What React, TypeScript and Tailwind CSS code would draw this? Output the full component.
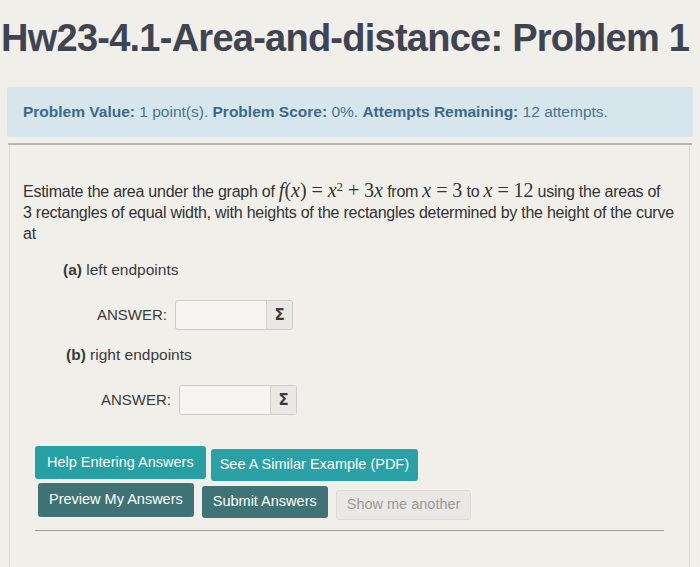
import React from 'react';

const AnswerBox = () => (
  <div className="flex h-[30px] w-[118px] rounded-[3px] border border-[#cfcdc8] bg-[#f6f5f1] overflow-hidden">
    <div className="flex-1" />
    <div className="flex w-[26px] items-center justify-center border-l border-[#d4d2cd] bg-[#e9e8e4] text-[15px] font-bold text-[#3b3b3b] font-['DejaVu_Sans',sans-serif]">
      Σ
    </div>
  </div>
);

const M = ({ children }: { children: React.ReactNode }) => (
  <span className="font-['Liberation_Serif',serif] italic text-[20px] leading-[0] tracking-normal">{children}</span>
);
const N = ({ children }: { children: React.ReactNode }) => (
  <span className="font-['Liberation_Serif',serif] text-[20px] leading-[0] tracking-normal">{children}</span>
);
const Op = ({ children }: { children: React.ReactNode }) => (
  <span className="inline-block px-[5px] font-['Liberation_Serif',serif] text-[20px] leading-[0]">{children}</span>
);

export default function App() {
  return (
    <div className="h-[567px] w-[700px] overflow-hidden bg-[#f1efea] font-['Liberation_Sans',Arial,sans-serif] text-[#3a3a3a]">
      {/* Title */}
      <h1 className="pl-[1px] pt-[14px] text-[38px] font-bold leading-[48px] tracking-[-0.75px] text-[#3e4452] whitespace-nowrap">
        Hw23-4.1-Area-and-distance: Problem 1
      </h1>

      {/* Problem info */}
      <div className="mx-[7px] mt-[25px] flex h-[50px] items-center rounded-[3px] bg-[#d6e6ec] pl-[16px] text-[15.5px] text-[#4a7594]">
        <span>
          <b className="text-[#3c6a8c]">Problem Value:</b> 1 point(s). <b className="text-[#3c6a8c]">Problem Score:</b> 0%.{' '}
          <b className="text-[#3c6a8c]">Attempts Remaining:</b> 12 attempts.
        </span>
      </div>
      <div className="mx-[8px] mt-[6px] h-[2px] bg-[#b9b7b3]" />

      {/* Body */}
      <div className="ml-[9px] mr-[10px] h-[430px] border-l border-r border-[#dcdad5] pl-[13px]">
        <p className="pt-[36px] pr-[4px] text-[16px] leading-[21px] tracking-[-0.25px] text-[#333333] whitespace-nowrap">
          Estimate the area under the graph of <M>f</M><N>(</N><M>x</M><N>)</N><Op>=</Op><M>x</M>
          <sup className="font-['Liberation_Serif',serif] text-[13px] tracking-normal">2</sup>
          <Op>+</Op><N>3</N><M>x</M> from <M>x</M><Op>=</Op><N>3</N> to <M>x</M><Op>=</Op><N>12</N> using the areas of
          <br />
          3 rectangles of equal width, with heights of the rectangles determined by the height of the curve
          <br />
          at
        </p>

        <div className="ml-[40px] mt-[16px] text-[15.5px] leading-[20px]">
          <b>(a)</b> left endpoints
        </div>
        <div className="ml-[74px] mt-[20px] flex items-center gap-[8px] text-[15px]">
          <span>ANSWER:</span>
          <AnswerBox />
        </div>

        <div className="ml-[43px] mt-[15px] text-[15.5px] leading-[20px]">
          <b>(b)</b> right endpoints
        </div>
        <div className="ml-[78px] mt-[20px] flex items-center gap-[8px] text-[15px]">
          <span>ANSWER:</span>
          <AnswerBox />
        </div>

        <div className="ml-[12px] mt-[31px] flex flex-col gap-[2px] text-[14.5px]">
          <div className="flex items-start gap-[5px]">
            <button className="h-[33px] rounded-[3px] bg-[#27a0a3] px-[12px] text-white">Help Entering Answers</button>
            <button className="mt-[3px] h-[32px] rounded-[3px] bg-[#2aa1a6] px-[9px] text-white">See A Similar Example (PDF)</button>
          </div>
          <div className="flex items-start gap-[8px]">
            <button className="ml-[3px] h-[34px] rounded-[3px] bg-[#3e7274] px-[11px] text-white">Preview My Answers</button>
            <button className="mt-[3px] h-[32px] rounded-[3px] bg-[#3f7375] px-[11px] text-white">Submit Answers</button>
            <button className="mt-[7px] h-[30px] rounded-[3px] border border-[#dddcd8] bg-[#e9e8e4] px-[10px] text-[#9a9a98]">
              Show me another
            </button>
          </div>
        </div>
        <div className="ml-[12px] mr-[25px] mt-[10px] h-[1px] bg-[#9d9b97]" />
      </div>
    </div>
  );
}
